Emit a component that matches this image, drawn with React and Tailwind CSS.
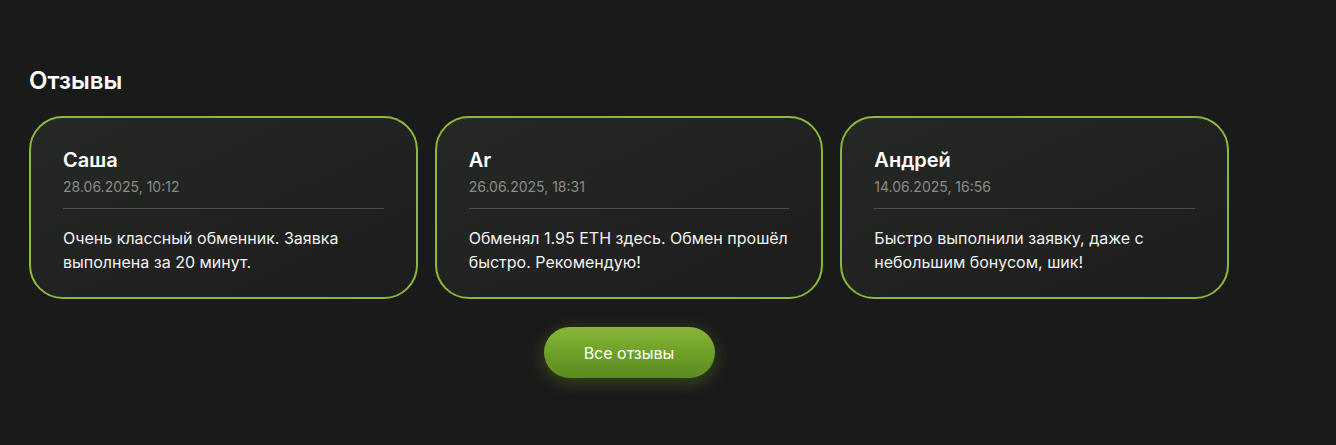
import React from 'react';

const REVIEWS = [
  {
    id: 1,
    name: 'Саша',
    date: '28.06.2025, 10:12',
    text: 'Очень классный обменник. Заявка выполнена за 20 минут.',
  },
  {
    id: 2,
    name: 'Ar',
    date: '26.06.2025, 18:31',
    text: 'Обменял 1.95 ETH здесь. Обмен прошёл быстро. Рекомендую!',
  },
  {
    id: 3,
    name: 'Андрей',
    date: '14.06.2025, 16:56',
    text: 'Быстро выполнили заявку, даже с небольшим бонусом, шик!',
  },
];

const ReviewCard = ({ review }) => (
  <div className="rounded-[34px] border-2 border-[#8bb83c] bg-gradient-to-br from-[#262826] to-[#1c1d1c] pl-[32px] pr-[32px] pt-[29px] pb-[23px]">
    <h3 className="text-[20px] font-semibold leading-[26px] text-white">{review.name}</h3>
    <div className="mt-[4px] text-[14px] leading-[20px] text-[#8a8a8a]">{review.date}</div>
    <div className="mt-[11px] h-px bg-[#4c4d4c]" />
    <p className="mt-[17px] text-[16px] leading-[24px] text-[#f2f2f2]">{review.text}</p>
  </div>
);

export default function App() {
  return (
    <div className="min-h-[445px] bg-[#1a1a1a] pt-[66px] pl-[29px] font-['Inter',sans-serif]">
      <div className="w-[1200px]">
        <h2 className="text-[24px] font-semibold leading-[30px] text-white">Отзывы</h2>

        <div className="mt-[20px] grid grid-cols-3 gap-[17px]">
          {REVIEWS.map((r) => (
            <ReviewCard key={r.id} review={r} />
          ))}
        </div>

        <div className="mt-[28px] flex justify-center">
          <button className="h-[51px] w-[171px] rounded-full bg-gradient-to-b from-[#86b637] to-[#5a8b1e] text-[16px] text-white shadow-[0_4px_18px_rgba(120,170,40,0.35)]">
            Все отзывы
          </button>
        </div>
      </div>
    </div>
  );
}
